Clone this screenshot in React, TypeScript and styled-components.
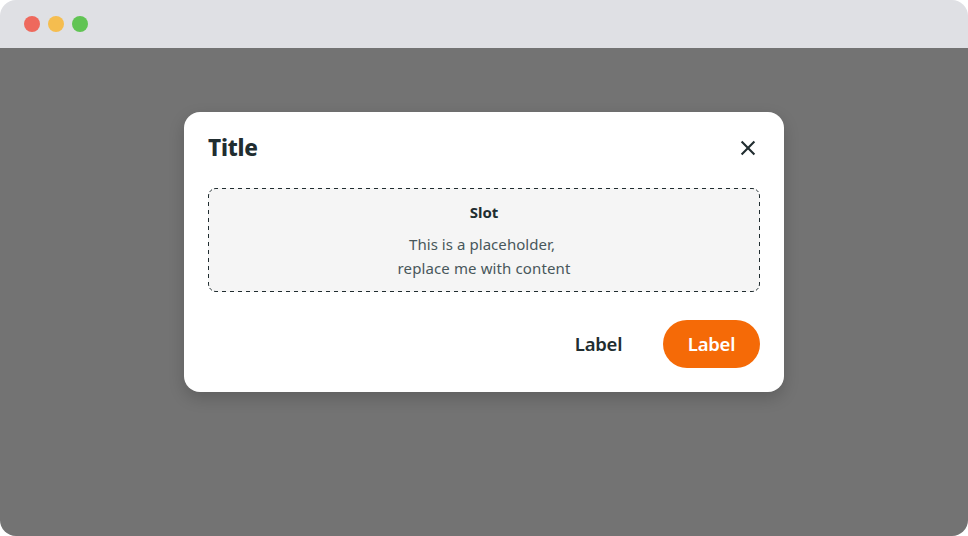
import React from "react";
import styled, { createGlobalStyle } from "styled-components";

const GlobalStyle = createGlobalStyle`
  * { box-sizing: border-box; }
  body { margin: 0; background: #fff; }
  button { font: inherit; border: 0; padding: 0; background: none; cursor: pointer; }
`;

const Window = styled.div`
  width: 968px;
  height: 536px;
  display: flex;
  flex-direction: column;
  border-radius: 16px;
  overflow: hidden;
  font-family: "Noto Sans", sans-serif;
  color: #212d30;
`;

const TitleBar = styled.header`
  height: 48px;
  flex: none;
  display: flex;
  align-items: center;
  gap: 8px;
  padding: 0 24px;
  background: #dfe0e4;
`;

const Light = styled.span<{ $color: string }>`
  width: 16px;
  height: 16px;
  border-radius: 50%;
  background: ${(p) => p.$color};
`;

const Backdrop = styled.main`
  flex: 1;
  display: flex;
  justify-content: center;
  align-items: flex-start;
  padding-top: 64px;
  background: #737373;
`;

const Dialog = styled.section`
  width: 600px;
  height: 280px;
  padding: 22px 24px 24px;
  display: flex;
  flex-direction: column;
  border-radius: 16px;
  background: #fff;
  box-shadow: 0 6px 16px rgba(0, 0, 0, 0.18);
`;

const Header = styled.div`
  height: 28px;
  display: flex;
  align-items: center;
  justify-content: space-between;
`;

const Title = styled.h2`
  margin: 0;
  padding-bottom: 1px;
  font-size: 22.5px;
  line-height: 26px;
  font-weight: 800;
  letter-spacing: -0.2px;
`;

const CloseButton = styled.button`
  width: 24px;
  height: 24px;
  display: flex;
`;

const Slot = styled.div`
  position: relative;
  height: 104px;
  margin-top: 26px;
  padding-top: 12px;
  border-radius: 8px;
  background: #f5f5f5;
  text-align: center;
`;

const DashedOutline = styled.svg`
  position: absolute;
  inset: 0;
`;

const SlotTitle = styled.h3`
  margin: 0 0 8px;
  font-size: 15px;
  line-height: 24px;
  font-weight: 700;
`;

const SlotText = styled.p<{ $spacing: string }>`
  margin: 0;
  font-size: 15px;
  line-height: 24px;
  letter-spacing: ${(p) => p.$spacing};
  color: #48575b;
`;

const Actions = styled.div`
  display: flex;
  justify-content: flex-end;
  gap: 16px;
  margin-top: 28px;
`;

const Button = styled.button<{ $primary?: boolean }>`
  width: 97px;
  height: 48px;
  border-radius: 24px;
  font-size: 18.5px;
  line-height: 24px;
  font-weight: 650;
  letter-spacing: -0.25px;
  color: ${(p) => (p.$primary ? "#fff" : "#212d30")};
  background: ${(p) => (p.$primary ? "#f56a07" : "transparent")};
`;

export default function App() {
  return (
    <>
      <GlobalStyle />
      <Window>
        <TitleBar>
          <Light $color="#ee695d" />
          <Light $color="#f5bd4f" />
          <Light $color="#61c454" />
        </TitleBar>
        <Backdrop>
          <Dialog role="dialog" aria-labelledby="dialog-title">
            <Header>
              <Title id="dialog-title">Title</Title>
              <CloseButton aria-label="Close">
                <svg width="24" height="24" viewBox="0 0 24 24" fill="none" stroke="#212d30" strokeWidth="2.1">
                  <path d="M5.6 5.6 18.4 18.4M18.4 5.6 5.6 18.4" />
                </svg>
              </CloseButton>
            </Header>
            <Slot>
              <DashedOutline width="552" height="104" fill="none" stroke="#212d30" aria-hidden="true">
                <path
                  d="M8 .5H544M8 103.5H544M.5 8V96M551.5 8V96"
                  strokeDasharray="4 4"
                  strokeDashoffset="2"
                />
                <path
                  d="M.5 8A7.5 7.5 0 0 1 8 .5M544 .5A7.5 7.5 0 0 1 551.5 8M551.5 96A7.5 7.5 0 0 1 544 103.5M8 103.5A7.5 7.5 0 0 1 .5 96"
                  strokeDasharray="2 2.39 3 2.39"
                />
              </DashedOutline>
              <SlotTitle>Slot</SlotTitle>
              <SlotText $spacing="0.06px">This is a placeholder,&nbsp;</SlotText>
              <SlotText $spacing="0.12px">replace me with content</SlotText>
            </Slot>
            <Actions>
              <Button>Label</Button>
              <Button $primary>Label</Button>
            </Actions>
          </Dialog>
        </Backdrop>
      </Window>
    </>
  );
}
